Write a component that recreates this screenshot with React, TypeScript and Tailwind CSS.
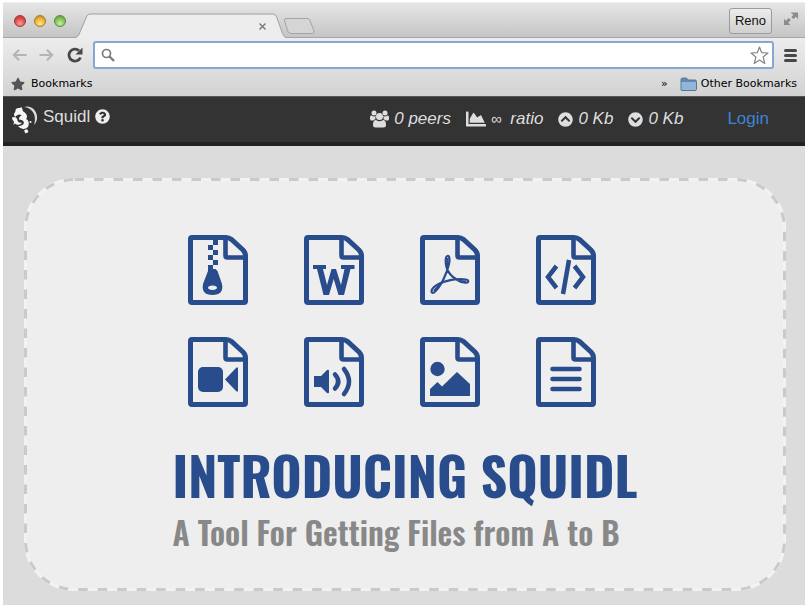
import type { ReactNode } from "react";
import { FaChartArea, FaChevronCircleDown, FaChevronCircleUp, FaQuestionCircle, FaStar } from "react-icons/fa";

const lights = [
  "border-[#9c3a3a] bg-[radial-gradient(circle_at_50%_75%,#ff9d97,#e14b4b_55%,#a93434)]",
  "border-[#a87a2c] bg-[radial-gradient(circle_at_50%_75%,#ffe98a,#eeb036_55%,#b47a20)]",
  "border-[#5d8a3f] bg-[radial-gradient(circle_at_50%_75%,#c9f0a0,#80c156_55%,#54883a)]",
];

function TitleBar() {
  return (
    <div className="flex h-9 items-start border-t border-[#efefef] bg-linear-to-b from-[#e6e6e6] to-[#c4c4c4] pr-[6px] pl-[11px] shadow-[inset_0_-1px_#a5a5a5]">
      <div className="flex gap-2 pt-3">
        {lights.map((light) => (
          <span key={light} className={`size-3 rounded-full border ${light}`} />
        ))}
      </div>
      <div className="relative ml-2 flex h-[35px] w-[212px] items-end justify-end pr-4 pb-1">
        <svg className="absolute inset-0" width="212" height="35" viewBox="0 0 212 35" aria-hidden="true">
          <path d="M1 35 C4 34 5 32 6 29 L12 15 C13 12 14 11 17 11 H198 C201 11 202 12 203 15 L208 29 C209 32 210 34 212 35 Z" fill="#ededed" />
          <path d="M1 34.500 C4 34 5 32 6 29 L12 15 C13 12 14 11 17 11 H198 C201 11 202 12 203 15 L208 29 C209 32 210 34 212 34.500" fill="none" stroke="#a0a0a0" />
        </svg>
        <button type="button" aria-label="Close tab" className="relative flex size-4 items-center justify-center text-[#777]">
          <svg width="7" height="7" viewBox="0 0 7 7" stroke="currentColor" strokeWidth="1.400" aria-hidden="true">
            <path d="M.5.5l6 6M6.500.5l-6 6" />
          </svg>
        </button>
      </div>
      <button type="button" aria-label="New tab" className="-ml-1 mt-[14px]">
        <svg className="block" width="34" height="18" viewBox="0 0 34 18" aria-hidden="true">
          <path d="M4 1.500 H25 Q27 1.500 28 3.500 L32 14 Q32.500 16.500 30.500 16.500 H9 Q7 16.500 6 14.500 L2.500 4 Q2 1.500 4 1.500Z" fill="#d5d5d5" stroke="#a3a3a3" />
        </svg>
      </button>
      <button type="button" className="mt-[5px] ml-auto h-[26px] w-[43px] rounded-[3px] border border-[#9b9b9b] bg-linear-to-b from-[#ececec] to-[#d0d0d0] font-['Liberation_Sans',sans-serif] text-[13px] text-[#111]">
        Reno
      </button>
      <button type="button" aria-label="Enter full screen" className="mt-[9px] ml-3">
        <svg className="block" width="15" height="14" viewBox="0 0 16 14" fill="#8c8c8c" aria-hidden="true">
          <path d="M7 0H15V7L12.800 4.500L10 7L7.800 5L10 2.400Z" />
          <path d="M0 7L2.300 8.800L5 6L7.200 8L4.400 11L7 13.500H0Z" />
        </svg>
      </button>
    </div>
  );
}

function Toolbar() {
  return (
    <div className="flex h-[34px] items-center pr-2 pl-[9px]">
      <button type="button" aria-label="Back" className="text-[#b4b4b4]">
        <svg width="15" height="14" viewBox="0 0 16 14" fill="none" stroke="currentColor" strokeWidth="2.200" aria-hidden="true">
          <path d="M15.500 7H2M7.500 1.500L2 7L7.500 12.500" />
        </svg>
      </button>
      <button type="button" aria-label="Forward" className="ml-3 text-[#b4b4b4]">
        <svg width="15" height="14" viewBox="0 0 16 14" fill="none" stroke="currentColor" strokeWidth="2.200" aria-hidden="true">
          <path d="M.5 7H14M8.500 1.500L14 7L8.500 12.500" />
        </svg>
      </button>
      <button type="button" aria-label="Reload" className="ml-[13px] text-[#484848]">
        <svg width="17" height="16" viewBox="0 0 17 16" aria-hidden="true">
          <path d="M13.500 10.500A6 6 0 1 1 12 3.600" fill="none" stroke="currentColor" strokeWidth="2.800" />
          <path d="M15.500 .5V7.500H8.500Z" fill="currentColor" />
        </svg>
      </button>
      <div className="ml-[9px] flex h-7 flex-1 items-center rounded-[3px] border-2 border-[#86a7d3] bg-white pr-[3px] pl-[6px]">
        <svg className="shrink-0" width="14" height="14" viewBox="0 0 14 14" fill="none" stroke="#7d7d7d" aria-hidden="true">
          <circle cx="5.500" cy="5.500" r="4" strokeWidth="1.700" />
          <path d="M8.500 8.500L13 13" strokeWidth="2.400" />
        </svg>
        <input aria-label="Address" className="h-5 min-w-0 flex-1 bg-transparent px-2 font-['Liberation_Sans',sans-serif] text-sm outline-none" />
        <button type="button" aria-label="Bookmark this page">
          <svg className="block" width="19" height="19" viewBox="0 0 19 19" aria-hidden="true">
            <path d="M9.500 1L11.700 6.700L18 7L13.100 11L14.800 17.500L9.500 14L4.200 17.500L5.900 11L1 7L7.300 6.700Z" fill="#fff" stroke="#858585" strokeWidth="1.200" strokeLinejoin="round" />
          </svg>
        </button>
      </div>
      <button type="button" aria-label="Menu" className="ml-[10px] flex w-[13px] flex-col gap-[2px]">
        <span className="h-[3px] rounded-sm bg-[#484848]" />
        <span className="h-[3px] rounded-sm bg-[#484848]" />
        <span className="h-[3px] rounded-sm bg-[#484848]" />
      </button>
    </div>
  );
}

function BookmarksBar() {
  return (
    <div className="flex h-6 items-center pr-2 pl-2 font-['DejaVu_Sans',sans-serif] text-[11px] text-black">
      <button type="button" className="flex items-center gap-[6px]">
        <FaStar className="size-[14px] text-[#555]" />
        Bookmarks
      </button>
      <button type="button" aria-label="More bookmarks" className="ml-auto">
        »
      </button>
      <button type="button" className="ml-3 flex items-center gap-1">
        <svg width="17" height="14" viewBox="0 0 17 14" aria-hidden="true">
          <path d="M1 2.500Q1 1 2.500 1H6.500L8 3H15Q16.500 3 16.500 4.500V12Q16.500 13.500 15 13.500H2Q1 13.500 1 12.500Z" fill="#628ab1" stroke="#567898" />
          <path d="M1.500 5H16V12.500Q16 13 15 13H2.500Q1.500 13 1.500 12Z" fill="#90b6d9" />
        </svg>
        Other Bookmarks
      </button>
    </div>
  );
}

function SquidlLogo() {
  return (
    <svg width="28" height="30" viewBox="0 0 28 30" aria-hidden="true">
      <path d="M13 2C19 0 25 4 26 11C26.500 15 25 18 23 20C25 14 24 8 19.500 4.500C17.500 3 15.500 2.300 13 2Z" fill="#dcdcdc" />
      <path d="M5 4C7 2 9 4 10 2C12 3 11 6 13 7C16 9 17 12 15 14C18 15 18.500 19 17 22C14 25 10 24 8 22L7 21C11 21 14 19 12.500 16.500C11 14 8 16 8 13.500C8 12 10 11 10.500 10C8 8.500 5.500 10 4.500 12C3 11 2.500 9 3.500 8C5 7 4 5 5 4Z" fill="#f7f7f7" />
      <path d="M1 12.500C4 11 6.500 13 6.500 15.500C7 17.500 9.500 18 11 17.500C10 20 6 20.500 4 18.500L2.500 20L3 16.500C2 15.500 1 14.500 1 12.500Z" fill="#f7f7f7" />
      <path d="M13 25.500L16 24L17.500 27L14.500 28.500Z" fill="#f7f7f7" />
      <circle cx="19.500" cy="17" r="1" fill="#f7f7f7" />
    </svg>
  );
}

function PeersIcon() {
  return (
    <svg width="19" height="18" viewBox="0 0 19 18" fill="currentColor" aria-hidden="true">
      <circle cx="4" cy="3" r="2.500" />
      <circle cx="15" cy="3" r="2.500" />
      <path d="M0 9V7.500Q0 5 1.500 5.500Q4 7 6 6Q5 7.500 5.500 9.200Q4 9.500 3.200 10.500H1.500Q0 10.500 0 9Z" />
      <path d="M19 9V7.500Q19 5 17.500 5.500Q15 7 13 6Q14 7.500 13.500 9.200Q15 9.500 15.800 10.500H17.500Q19 10.500 19 9Z" />
      <circle cx="9.500" cy="6.500" r="3.500" />
      <path d="M3 15Q3 10 6 10Q9.500 12.500 13 10Q16 10 16 15Q16 17.500 13.500 17.500H5.500Q3 17.500 3 15Z" />
    </svg>
  );
}

function Stat({ icon, children }: { icon: ReactNode; children: ReactNode }) {
  return (
    <li className="flex items-center gap-[5px]">
      {icon}
      <em>{children}</em>
    </li>
  );
}

function NavBar() {
  return (
    <nav className="flex h-[50px] items-start border-t border-b-4 border-t-[#555] border-b-[#222] bg-[#333] pr-9 pl-2 font-['Liberation_Sans',Arial,sans-serif] text-[17px] leading-6 whitespace-nowrap text-[#dedede]">
      <a href="#home" className="flex items-start gap-1 pt-2">
        <SquidlLogo />
        <span>Squidl</span>
      </a>
      <a href="#help" aria-label="Help" className="ml-[5px] pt-3">
        <FaQuestionCircle className="size-[15px] text-[#eee]" />
      </a>
      <ul className="ml-auto flex gap-[15px] pt-[10px]">
        <Stat icon={<PeersIcon />}>0 peers</Stat>
        <Stat icon={<FaChartArea className="size-5" />}>
          <span className="mr-1 text-[15px]">∞</span> ratio
        </Stat>
        <Stat icon={<FaChevronCircleUp className="size-[15px]" />}>0 Kb</Stat>
        <Stat icon={<FaChevronCircleDown className="size-[15px]" />}>0 Kb</Stat>
      </ul>
      <a href="#login" className="ml-11 pt-[10px] text-[#3d84d2]">
        Login
      </a>
    </nav>
  );
}

const fileKinds: { name: string; mark: ReactNode }[] = [
  {
    name: "Archive",
    mark: (
      <g>
        <path d="M25 5h5v5h-5zM20 10h5v5h-5zM25 15h5v5h-5zM20 20h5v5h-5zM25 25h5v5h-5zM20 30h5v5h-5z" />
        <path fillRule="evenodd" d="M20 34H27.500L29.500 36L34 49Q36 60 24.500 60Q13 60 15 49L20 36ZM24.500 50.500C18.500 50.500 18.500 55 24.500 55S30.500 50.500 24.500 50.500Z" />
      </g>
    ),
  },
  {
    name: "Word document",
    mark: (
      <path d="M9 30H22V34H19L23 50L27.500 34H32L37 50L40.500 34H37V30H50.500V34H46.500L40 60H34.500L29.700 44L25 60H19.500L13 34H9Z" />
    ),
  },
  {
    name: "PDF",
    mark: (
      <g fill="none" stroke="currentColor" strokeLinejoin="round">
        <path d="M27.500 21C25 21.500 25.500 28 26.500 32C28 39 36 46 44 47.500C49 48.500 49.500 45 46 44.500C38 43 25 45 17 50C10 54 10.500 59 14 57.500C21 52 27 38 29 29C30 24 29.500 20.500 27.500 21Z" strokeWidth="2.200" />
        <path d="M27.500 23V31M14 56L20 49.500M39 46L46 46.500" strokeWidth="2" />
      </g>
    ),
  },
  {
    name: "Source code",
    mark: (
      <g fill="none" stroke="currentColor" strokeWidth="4.500">
        <path d="M20.500 31L12 42L20.500 53M38.500 31L47 42L38.500 53" />
        <path d="M33 25L27 59" />
      </g>
    ),
  },
  {
    name: "Video",
    mark: (
      <g>
        <rect x="10" y="30" width="25" height="25" rx="5" />
        <path d="M37 42.500L48 31Q50 29 50 32V53Q50 56 48 54Z" />
      </g>
    ),
  },
  {
    name: "Audio",
    mark: (
      <g>
        <path d="M10 39H17L23 33Q25 32 25 34V55Q25 57 23 56L17 50H10Z" />
        <path d="M31 37.500Q37.500 44.500 31 51.500M40 32Q50 44.500 40 57" fill="none" stroke="currentColor" strokeWidth="4.500" strokeLinecap="round" />
      </g>
    ),
  },
  {
    name: "Image",
    mark: (
      <g>
        <circle cx="17.500" cy="32" r="7.200" />
        <path d="M10 59V52L17.500 45L22 49.500L37 35L50 47V59Z" />
      </g>
    ),
  },
  {
    name: "Text",
    mark: <path d="M16.500 32H43.500M16.500 42H43.500M16.500 52H43.500" stroke="currentColor" strokeWidth="4.600" strokeLinecap="round" />,
  },
];

function FileIcon({ name, children }: { name: string; children: ReactNode }) {
  return (
    <svg className="block" width="60" height="70" viewBox="0 0 60 70" fill="currentColor" role="img" aria-label={name}>
      <path
        d="M4 2.500H38Q41 2.500 43.500 4.500L55 15Q57.500 17.500 57.500 21V66Q57.500 67.500 56 67.500H4Q2.500 67.500 2.500 66V4Q2.500 2.500 4 2.500Z"
        fill="none"
        stroke="currentColor"
        strokeWidth="5"
      />
      <path d="M37.500 3V20.500Q37.500 22.500 39.500 22.500H57" fill="none" stroke="currentColor" strokeWidth="4.600" />
      {children}
    </svg>
  );
}

function DropZone() {
  return (
    <section className="relative flex flex-1 flex-col items-center rounded-[50px] bg-[#eee] px-4 pt-[57px] pb-8 font-['Oswald','Roboto_Condensed','Liberation_Sans_Narrow',sans-serif] whitespace-nowrap">
      <svg className="absolute inset-0 size-full overflow-visible" aria-hidden="true">
        <rect x="1.500" y="1.500" rx="49" fill="none" stroke="#f2f2f2" strokeWidth="3" className="h-[calc(100%-3px)] w-[calc(100%-3px)]" />
        <rect x="1.500" y="1.500" rx="49" fill="none" stroke="#cacaca" strokeWidth="3" strokeDasharray="9.500 10" className="h-[calc(100%-3px)] w-[calc(100%-3px)]" />
      </svg>
      <div className="mr-[26px] grid grid-cols-4 gap-x-14 gap-y-8 text-[#294c8c]">
        {fileKinds.map((kind) => (
          <FileIcon key={kind.name} name={kind.name}>
            {kind.mark}
          </FileIcon>
        ))}
      </div>
      <div className="mt-8">
        <h1 className="text-[52px] leading-[72px] font-bold text-[#294c8c]">INTRODUCING SQUIDL</h1>
        <p className="text-[32px] leading-[42px] font-semibold text-[#888]">A Tool For Getting Files from A to B</p>
      </div>
    </section>
  );
}

export default function App() {
  return (
    <div className="flex min-h-screen flex-col bg-white pt-[2px] pr-[2px] pl-[3px]">
      <header>
        <TitleBar />
        <div className="bg-linear-to-b from-[#ededed] to-[#d2d2d2]">
          <Toolbar />
          <BookmarksBar />
        </div>
      </header>
      <NavBar />
      <main className="flex flex-1 flex-col bg-[#dcdcdc] pt-8 pr-[19px] pb-[14px] pl-[21px]">
        <DropZone />
      </main>
    </div>
  );
}
